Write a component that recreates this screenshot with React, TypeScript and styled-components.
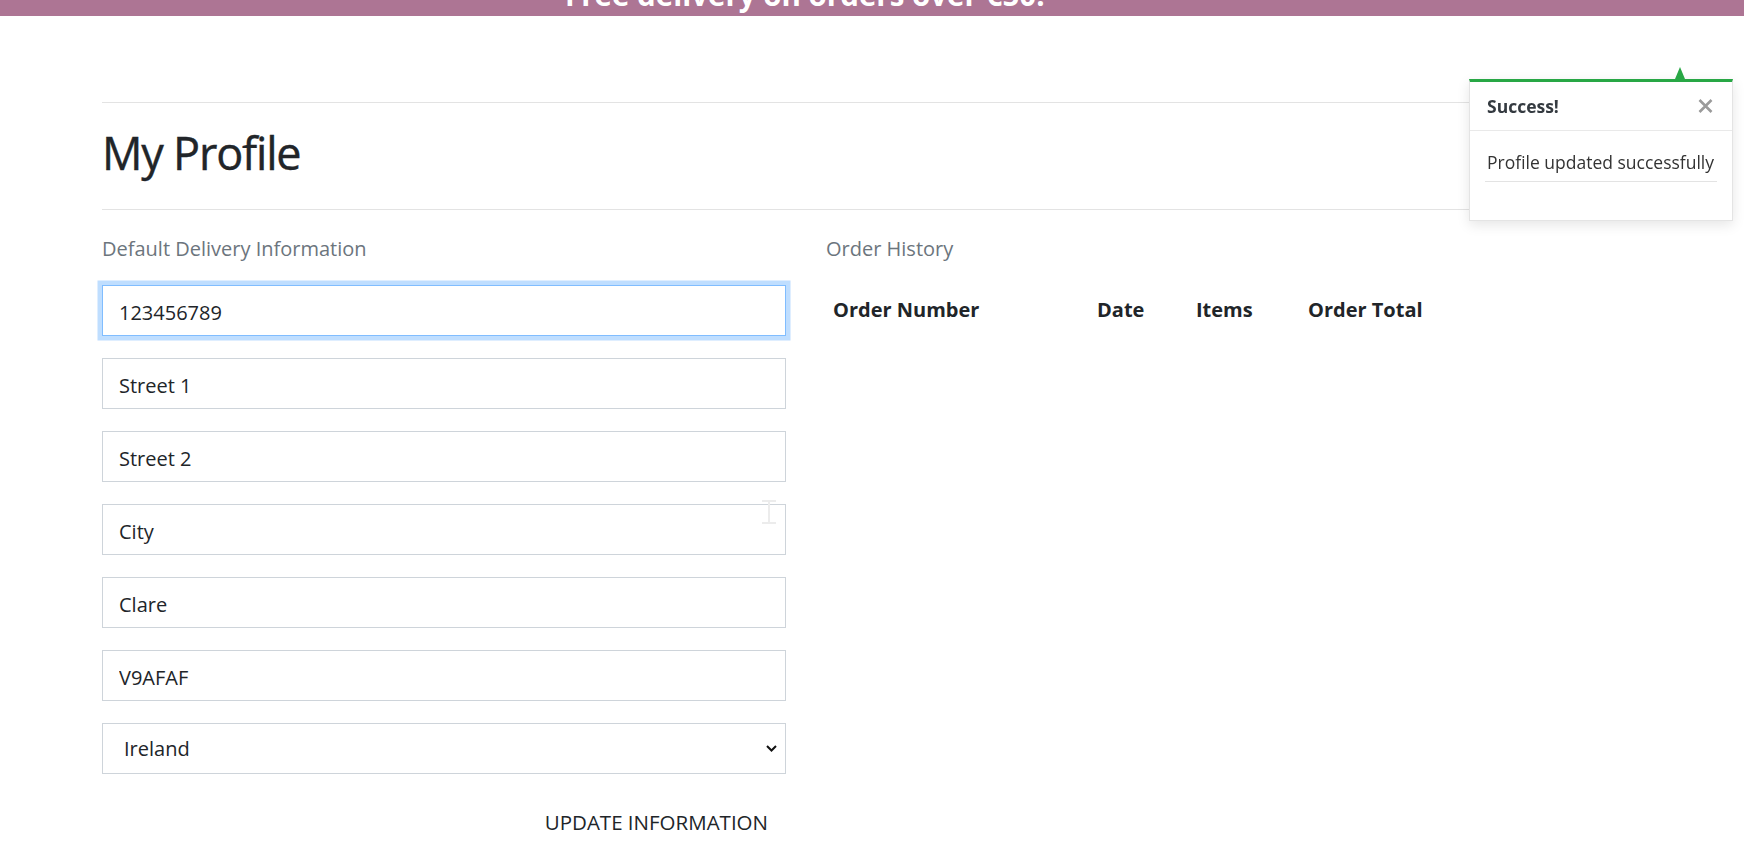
import React from "react";
import styled, { createGlobalStyle } from "styled-components";

const GlobalStyle = createGlobalStyle`
  html, body { margin: 0; padding: 0; background: #fff; }
  body { font-family: "Open Sans", "Noto Sans", sans-serif; color: #212529; }
  * { box-sizing: border-box; }
`;

const Banner = styled.div`
  height: 16px;
  background: #ad7594;
  overflow: hidden;
`;

const BannerText = styled.p`
  margin: -20px 0 0 565px;
  font-size: 29.5px;
  font-weight: 700;
  line-height: 1;
  color: #fff;
  white-space: nowrap;
`;

const Page = styled.main`
  margin: 86px 102px 0;
`;

const Rule = styled.hr`
  margin: 0;
  height: 0;
  border: 0;
  border-top: 1px solid #e3e3e3;
`;

const Title = styled.h1`
  margin: 22.5px 0 29.5px;
  font-size: 45px;
  font-weight: 400;
  line-height: 1.2;
  letter-spacing: -1.2px;
  color: #212529;
  -webkit-text-stroke: 0.4px #212529;
`;

const Columns = styled.div`
  display: grid;
  grid-template-columns: 684px 1fr;
  column-gap: 40px;
  margin-top: 24px;
`;

const Column = styled.section`
  display: flex;
  flex-direction: column;
`;

const SectionLabel = styled.p`
  margin: 0 0 21px;
  font-size: 20px;
  line-height: 30px;
  color: #6c757d;
`;

const Field = styled.input<{ $focused?: boolean }>`
  display: block;
  width: 100%;
  height: 51px;
  margin: 0 0 22px;
  padding: 3px 16px 0;
  font-family: inherit;
  font-size: 20px;
  color: #212529;
  background: #fff;
  border: 1px solid ${(p) => (p.$focused ? "#80bdff" : "#ced4da")};
  border-radius: 0;
  outline: none;
  box-shadow: ${(p) => (p.$focused ? "0 0 0 4.5px rgba(0, 123, 255, 0.25)" : "none")};
`;

const SelectWrap = styled.div`
  position: relative;
  margin: 0 0 22px;
`;

const Select = styled.select`
  display: block;
  width: 100%;
  height: 51px;
  padding: 0 40px 0 21px;
  font-family: inherit;
  font-size: 20px;
  color: #212529;
  background: #fff;
  border: 1px solid #ced4da;
  border-radius: 0;
  appearance: none;
  -webkit-appearance: none;
  outline: none;
`;

const Chevron = styled.svg`
  position: absolute;
  right: 9px;
  top: 22px;
  pointer-events: none;
`;

const ButtonRow = styled.div`
  display: flex;
  justify-content: flex-end;
`;

const TextButton = styled.button`
  padding: 11px 18px 12px;
  font-family: inherit;
  font-size: 20.5px;
  line-height: 1.5;
  color: #212529;
  background: transparent;
  border: 0;
  cursor: pointer;
`;

const HeaderRow = styled.div`
  display: grid;
  grid-template-columns: 264px 99px 112px auto;
  margin-top: 10px;
  padding-left: 7px;
`;

const HeaderCell = styled.div`
  font-size: 20px;
  font-weight: 700;
  line-height: 1.5;
  color: #212529;
  white-space: nowrap;
`;

const Toast = styled.div`
  position: fixed;
  top: 79px;
  right: 11px;
  width: 264px;
  background: #fff;
  border: 1px solid rgba(0, 0, 0, 0.1);
  border-top: 3px solid #28a745;
  box-shadow: 0 4px 12px rgba(0, 0, 0, 0.1);
`;

const ToastArrow = styled.span`
  position: absolute;
  top: -15px;
  right: 47px;
  width: 0;
  height: 0;
  border-left: 5px solid transparent;
  border-right: 5px solid transparent;
  border-bottom: 12px solid #28a745;
`;

const ToastHeader = styled.div`
  display: flex;
  align-items: center;
  justify-content: space-between;
  height: 49px;
  padding: 0 19px 0 17px;
  border-bottom: 1px solid #e9e9e9;
`;

const ToastTitle = styled.strong`
  font-size: 17.5px;
  font-weight: 700;
  color: #343a40;
`;

const CloseButton = styled.button`
  display: flex;
  padding: 0;
  background: transparent;
  border: 0;
  cursor: pointer;
`;

const ToastBody = styled.div`
  padding: 18px 15px 38px;
`;

const ToastText = styled.p`
  margin: 0 0 0 2px;
  font-size: 17.5px;
  line-height: 1.5;
  color: #333;
  white-space: nowrap;
`;

const ToastRule = styled.hr`
  margin: 5.75px 0 0;
  height: 0;
  border: 0;
  border-top: 1px solid #e3e3e3;
`;

const Cursor = styled.svg`
  position: fixed;
  left: 762px;
  top: 500px;
  pointer-events: none;
`;

export default function App() {
  return (
    <>
      <GlobalStyle />
      <Banner>
        <BannerText>Free delivery on orders over €50!</BannerText>
      </Banner>
      <Page>
        <Rule />
        <Title>My Profile</Title>
        <Rule />
        <Columns>
          <Column>
            <SectionLabel>Default Delivery Information</SectionLabel>
            <Field $focused defaultValue="123456789" />
            <Field defaultValue="Street 1" />
            <Field defaultValue="Street 2" />
            <Field defaultValue="City" />
            <Field defaultValue="Clare" />
            <Field defaultValue="V9AFAF" />
            <SelectWrap>
              <Select defaultValue="IE">
                <option value="IE">Ireland</option>
              </Select>
              <Chevron width="11" height="7" viewBox="0 0 11 7">
                <polyline points="1,1 5.5,5.5 10,1" fill="none" stroke="#111" strokeWidth="2" />
              </Chevron>
            </SelectWrap>
            <ButtonRow>
              <TextButton type="button">UPDATE INFORMATION</TextButton>
            </ButtonRow>
          </Column>
          <Column>
            <SectionLabel>Order History</SectionLabel>
            <HeaderRow>
              <HeaderCell>Order Number</HeaderCell>
              <HeaderCell>Date</HeaderCell>
              <HeaderCell>Items</HeaderCell>
              <HeaderCell>Order Total</HeaderCell>
            </HeaderRow>
          </Column>
        </Columns>
      </Page>
      <Toast>
        <ToastArrow />
        <ToastHeader>
          <ToastTitle>Success!</ToastTitle>
          <CloseButton type="button" aria-label="Close">
            <svg width="15" height="14" viewBox="0 0 15 14">
              <path d="M1.5 1 L13.5 13 M13.5 1 L1.5 13" stroke="#9a9a9a" strokeWidth="2.6" />
            </svg>
          </CloseButton>
        </ToastHeader>
        <ToastBody>
          <ToastText>Profile updated successfully</ToastText>
          <ToastRule />
        </ToastBody>
      </Toast>
      <Cursor width="14" height="24" viewBox="0 0 14 24">
        <path d="M0 1 H14 M7 1 V23 M0 23 H14" stroke="#ececec" strokeWidth="2" fill="none" />
      </Cursor>
    </>
  );
}
